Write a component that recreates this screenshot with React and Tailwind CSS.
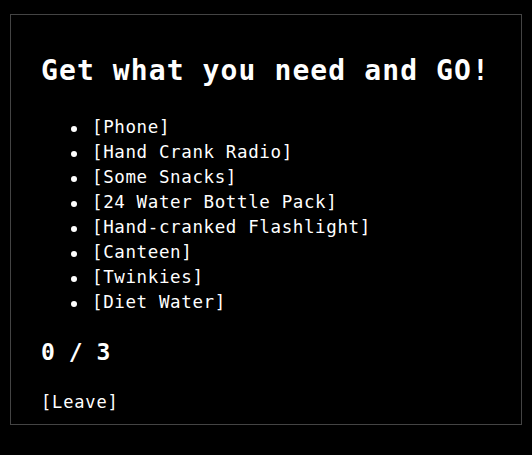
const items = [
    "[Phone]",
    "[Hand Crank Radio]",
    "[Some Snacks]",
    "[24 Water Bottle Pack]",
    "[Hand-cranked Flashlight]",
    "[Canteen]",
    "[Twinkies]",
    "[Diet Water]",
];

const App = () => {
    return (
        <div className="min-h-[455px] bg-black pt-[14px] pl-[10px] text-white font-['DejaVu_Sans_Mono',monospace]">
            <div className="w-[512px] h-[411px] border border-[#444] px-[30px] pt-[38px]">
                <h1 className="text-[28px] leading-[36px] tracking-[1.1px] font-bold">
                    Get what you need and GO!
                </h1>

                <ul className="mt-[26px] pl-[30px] text-[17.5px] leading-[25px] tracking-[0.62px]">
                    {items.map((item) => (
                        <li key={item} className="flex items-center">
                            <span className="w-[6px] h-[6px] mt-[3px] mr-[15px] rounded-full bg-white shrink-0" />
                            {item}
                        </li>
                    ))}
                </ul>

                <h2 className="mt-[22px] text-[23px] leading-[30px] font-bold">
                    0 / 3
                </h2>

                <div className="mt-[23px] text-[17px] leading-[25px] tracking-[0.85px]">
                    [Leave]
                </div>
            </div>
        </div>
    );
};

export default App;
